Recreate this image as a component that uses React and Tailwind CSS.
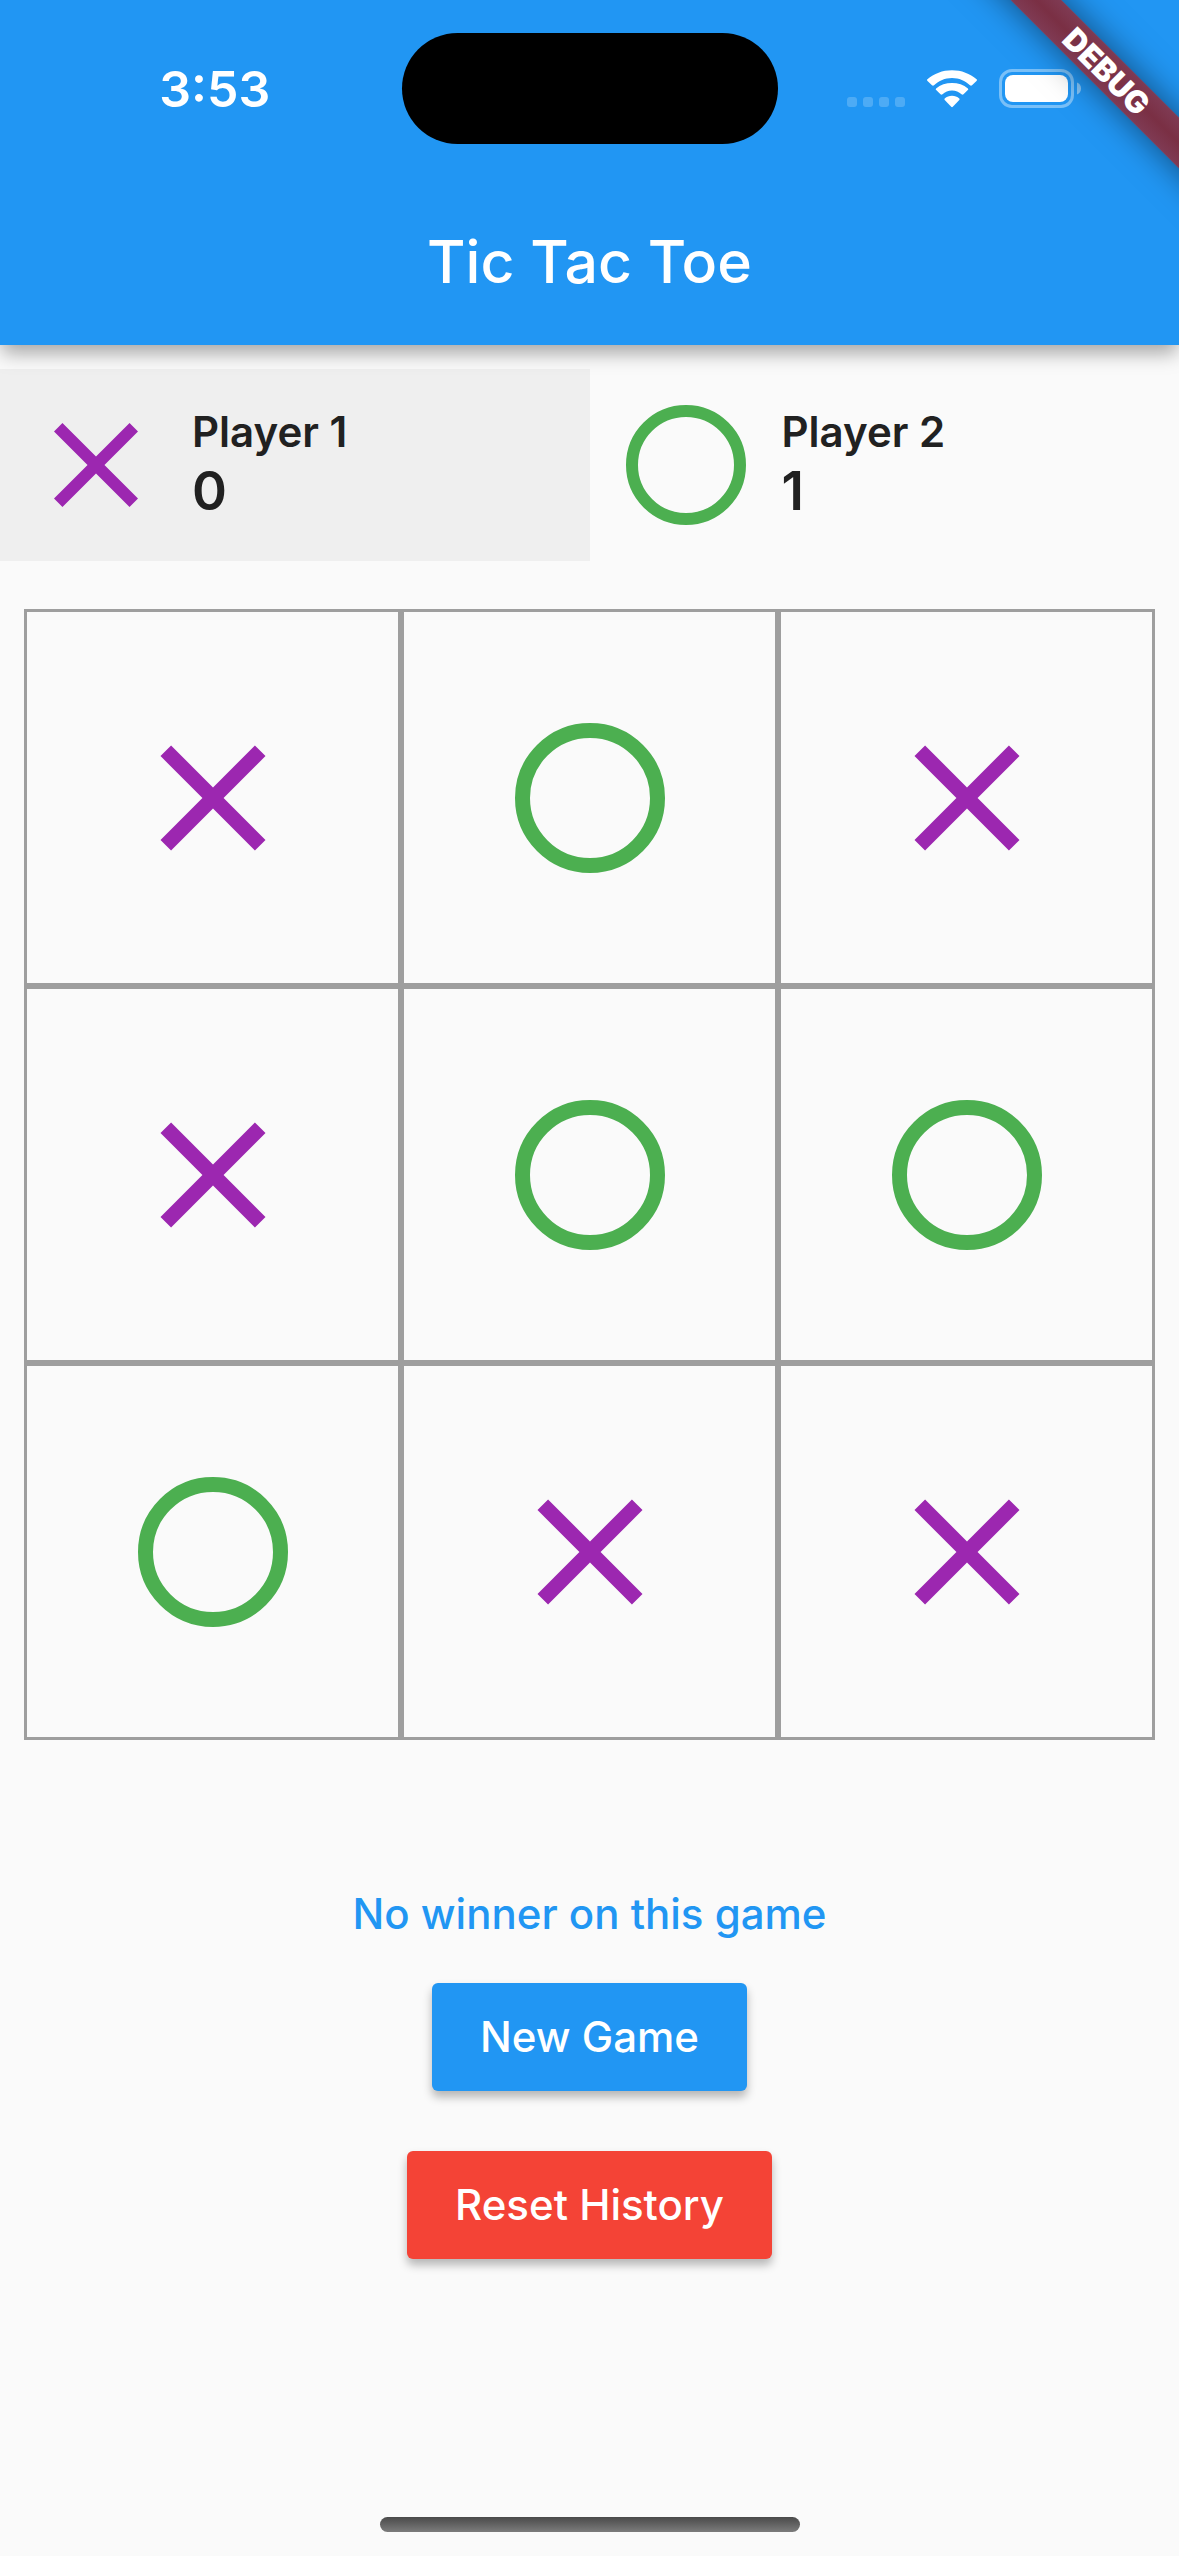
import { useState } from "react";

const LINES = [
  [0, 1, 2], [3, 4, 5], [6, 7, 8],
  [0, 3, 6], [1, 4, 7], [2, 5, 8],
  [0, 4, 8], [2, 4, 6],
];

const START = ["X", "O", "X", "X", "O", "O", "O", "X", "X"];

function winnerOf(board) {
  const line = LINES.find(([a, b, c]) => board[a] && board[a] === board[b] && board[a] === board[c]);
  return line ? board[line[0]] : null;
}

function Mark({ value, className }) {
  if (value === "X") {
    return (
      <svg viewBox="0 0 24 24" className={className} fill="#9c27b0" aria-hidden="true">
        <path d="M19 6.41L17.59 5 12 10.59 6.41 5 5 6.41 10.59 12 5 17.59 6.41 19 12 13.41 17.59 19 19 17.59 13.41 12z" />
      </svg>
    );
  }
  return (
    <svg viewBox="0 0 24 24" className={className} fill="none" stroke="#4caf50" strokeWidth="2" aria-hidden="true">
      <circle cx="12" cy="12" r="9" />
    </svg>
  );
}

function StatusBar() {
  return (
    <div className="grid h-[177px] grid-cols-[1fr_376px_1fr] items-center">
      <span className="pl-7 text-center text-[50px] leading-none font-semibold">3:53</span>
      <div className="h-[111px] rounded-full bg-black" />
      <div className="flex items-end justify-center gap-[22px] pr-7">
        <svg viewBox="0 0 58 11" className="h-[11px] w-[58px]" fill="#fff" fillOpacity="0.2" aria-hidden="true">
          <rect x="0" width="10" height="10" rx="3" />
          <rect x="16" width="10" height="10" rx="3" />
          <rect x="32" width="10" height="10" rx="3" />
          <rect x="48" width="10" height="10" rx="3" />
        </svg>
        <svg viewBox="0 0 50 38" className="h-[38px] w-[50px]" fill="#fff" aria-hidden="true">
          <path d="M25 8c7 0 13.200 2.800 18 7.200l1 .6 1-.5 4.500-4.400c.6-.5.6-1.100.1-1.600C43 3.500 34.500.2 25 .2S7 3.500.4 9.300c-.5.500-.5 1.100.1 1.600L5 15.300l1 .5 1-.6C11.800 10.800 18 8 25 8z" />
          <path d="M25 20.600c3.700 0 7 1.400 9.500 3.700l1 .4 1-.5 4.300-4.200c.6-.6.6-1.100.1-1.600-4.200-3.800-10-5.500-15.900-5.500s-11.700 1.700-15.900 5.500c-.5.500-.5 1 .1 1.600l4.300 4.200 1 .5 1-.4c2.500-2.300 5.800-3.700 9.500-3.700z" />
          <path d="M32.300 28.600c.4.400.4.900 0 1.400l-6.500 6.800c-.5.500-1.100.5-1.600 0L17.700 30c-.4-.5-.4-1 0-1.400 2-1.800 4.500-2.800 7.300-2.800s5.300 1 7.300 2.800z" />
        </svg>
        <svg viewBox="0 0 82 39" className="h-[39px] w-[82px]" aria-hidden="true">
          <rect x="1.500" y="1.500" width="72" height="36" rx="11.500" fill="none" stroke="#fff" strokeOpacity="0.4" strokeWidth="3" />
          <rect x="6" y="6" width="63" height="27" rx="8" fill="#fff" />
          <path d="M78 13.500v12c2.600-1 4-3.300 4-6s-1.400-5-4-6z" fill="#fff" fillOpacity="0.45" />
        </svg>
      </div>
    </div>
  );
}

function DebugRibbon() {
  return (
    <div className="pointer-events-none absolute top-0 right-0 size-[260px] overflow-hidden">
      <div className="absolute top-[53px] right-[-128px] flex h-9 w-[400px] rotate-45 items-center justify-center bg-linear-to-b from-[#7f3b54] via-[#7a2f44] to-[#7f3b54] text-[31px] leading-none font-black shadow-[0_0_34px_rgba(0,0,0,0.5)]">
        DEBUG
      </div>
    </div>
  );
}

function Player({ mark, name, score, active }) {
  return (
    <div className={active ? "flex flex-1 items-center gap-6 bg-[#efefef] p-6" : "flex flex-1 items-center gap-6 p-6"}>
      <Mark value={mark} className="size-36" />
      <div className="font-semibold">
        <p className="text-[42px] leading-[52px]">{name}</p>
        <p className="text-[53px] leading-[66px]">{score}</p>
      </div>
    </div>
  );
}

export default function App() {
  const [board, setBoard] = useState(START);
  const [turn, setTurn] = useState("X");
  const [scores, setScores] = useState({ X: 0, O: 1 });

  const winner = winnerOf(board);
  const full = board.every(Boolean);

  function play(index) {
    if (board[index] || winner) return;
    const next = board.map((value, i) => (i === index ? turn : value));
    const won = winnerOf(next);
    setBoard(next);
    if (won) setScores({ ...scores, [won]: scores[won] + 1 });
    setTurn(turn === "X" ? "O" : "X");
  }

  function newGame() {
    setBoard(Array(9).fill(null));
  }

  function resetHistory() {
    newGame();
    setScores({ X: 0, O: 0 });
  }

  let message = `Player ${turn === "X" ? 1 : 2} to play`;
  if (winner) message = `Player ${winner === "X" ? 1 : 2} wins this game`;
  else if (full) message = "No winner on this game";

  return (
    <div className="flex min-h-screen flex-col overflow-x-hidden bg-[#fafafa] font-['Inter',sans-serif] text-[#212121]">
      <header className="relative z-10 bg-[#2196f3] text-white shadow-[0_10px_18px_-2px_rgba(0,0,0,0.34)]">
        <StatusBar />
        <div className="flex h-[168px] items-center justify-center">
          <h1 className="text-[59px] leading-none font-medium">Tic Tac Toe</h1>
        </div>
        <DebugRibbon />
      </header>

      <main className="flex flex-col items-center pt-6">
        <section className="flex w-full" aria-label="Scores">
          <Player mark="X" name="Player 1" score={scores.X} active={turn === "X"} />
          <Player mark="O" name="Player 2" score={scores.O} active={turn === "O"} />
        </section>

        <div className="w-full px-6 pt-12">
          <div className="grid grid-cols-3">
            {board.map((value, i) => (
              <button
                key={i}
                type="button"
                onClick={() => play(i)}
                aria-label={`Cell ${i + 1}: ${value || "empty"}`}
                className="flex aspect-square items-center justify-center border-3 border-[#9e9e9e]"
              >
                {value && <Mark value={value} className="size-[180px]" />}
              </button>
            ))}
          </div>
        </div>

        <p className="mt-[149px] text-[42px] leading-[50px] font-medium text-[#2196f3]">{message}</p>
        <button
          type="button"
          onClick={newGame}
          className="mt-11 h-[108px] rounded-md bg-[#2196f3] px-12 text-[42px] leading-none font-medium text-white shadow-[0_6px_10px_rgba(0,0,0,0.28)]"
        >
          New Game
        </button>
        <button
          type="button"
          onClick={resetHistory}
          className="mt-[60px] h-[108px] rounded-md bg-[#f44336] px-12 text-[42px] leading-none font-medium text-white shadow-[0_6px_10px_rgba(0,0,0,0.28)]"
        >
          Reset History
        </button>
      </main>

      <div className="mx-auto mt-auto mb-6 h-[15px] w-[420px] rounded-full bg-linear-to-b from-[#4a4a4a] to-[#7c7c7c]" />
    </div>
  );
}
